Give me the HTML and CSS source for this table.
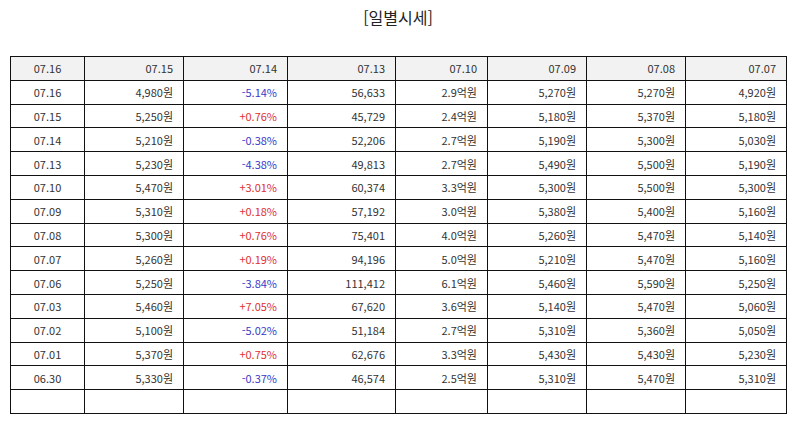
FILE: index.html
```html
<!DOCTYPE html>
<html lang="ko">
<head>
<meta charset="utf-8">
<title>일별시세</title>
<link rel="stylesheet" href="styles.css">
</head>
<body>
<div class="page">
  <h1 class="title">[일별시세]</h1>
  <table class="quotes">
    <colgroup>
      <col class="c1"><col class="c2"><col class="c3"><col class="c4"><col class="c5"><col class="c6"><col class="c7"><col class="c8">
    </colgroup>
    <thead>
      <tr><th class="date">07.16</th><th>07.15</th><th>07.14</th><th>07.13</th><th>07.10</th><th>07.09</th><th>07.08</th><th>07.07</th></tr>
    </thead>
    <tbody>
      <tr><td class="date">07.16</td><td>4,980원</td><td class="down">-5.14%</td><td>56,633</td><td>2.9억원</td><td>5,270원</td><td>5,270원</td><td>4,920원</td></tr>
      <tr><td class="date">07.15</td><td>5,250원</td><td class="up">+0.76%</td><td>45,729</td><td>2.4억원</td><td>5,180원</td><td>5,370원</td><td>5,180원</td></tr>
      <tr><td class="date">07.14</td><td>5,210원</td><td class="down">-0.38%</td><td>52,206</td><td>2.7억원</td><td>5,190원</td><td>5,300원</td><td>5,030원</td></tr>
      <tr><td class="date">07.13</td><td>5,230원</td><td class="down">-4.38%</td><td>49,813</td><td>2.7억원</td><td>5,490원</td><td>5,500원</td><td>5,190원</td></tr>
      <tr><td class="date">07.10</td><td>5,470원</td><td class="up">+3.01%</td><td>60,374</td><td>3.3억원</td><td>5,300원</td><td>5,500원</td><td>5,300원</td></tr>
      <tr><td class="date">07.09</td><td>5,310원</td><td class="up">+0.18%</td><td>57,192</td><td>3.0억원</td><td>5,380원</td><td>5,400원</td><td>5,160원</td></tr>
      <tr><td class="date">07.08</td><td>5,300원</td><td class="up">+0.76%</td><td>75,401</td><td>4.0억원</td><td>5,260원</td><td>5,470원</td><td>5,140원</td></tr>
      <tr><td class="date">07.07</td><td>5,260원</td><td class="up">+0.19%</td><td>94,196</td><td>5.0억원</td><td>5,210원</td><td>5,470원</td><td>5,160원</td></tr>
      <tr><td class="date">07.06</td><td>5,250원</td><td class="down">-3.84%</td><td>111,412</td><td>6.1억원</td><td>5,460원</td><td>5,590원</td><td>5,250원</td></tr>
      <tr><td class="date">07.03</td><td>5,460원</td><td class="up">+7.05%</td><td>67,620</td><td>3.6억원</td><td>5,140원</td><td>5,470원</td><td>5,060원</td></tr>
      <tr><td class="date">07.02</td><td>5,100원</td><td class="down">-5.02%</td><td>51,184</td><td>2.7억원</td><td>5,310원</td><td>5,360원</td><td>5,050원</td></tr>
      <tr><td class="date">07.01</td><td>5,370원</td><td class="up">+0.75%</td><td>62,676</td><td>3.3억원</td><td>5,430원</td><td>5,430원</td><td>5,230원</td></tr>
      <tr><td class="date">06.30</td><td>5,330원</td><td class="down">-0.37%</td><td>46,574</td><td>2.5억원</td><td>5,310원</td><td>5,470원</td><td>5,310원</td></tr>
      <tr class="empty"><td></td><td></td><td></td><td></td><td></td><td></td><td></td><td></td></tr>
    </tbody>
  </table>
</div>
</body>
</html>
```

FILE: styles.css
```css
html, body {
  margin: 0;
  padding: 0;
  background: #ffffff;
}

.page {
  padding: 0 8px 0 10px;
  font-family: "Noto Sans CJK KR", "Noto Sans", sans-serif;
  color: #333333;
}

.title {
  margin: 7px 0 0 0;
  height: 49px;
  font-size: 16px;
  line-height: 21px;
  font-weight: 400;
  text-align: center;
  color: #222222;
}

.quotes {
  width: 776px;
  table-layout: fixed;
  border-collapse: collapse;
  font-size: 11px;
}

.c1 { width: 74px; }
.c2 { width: 99px; }
.c3 { width: 104px; }
.c4 { width: 108px; }
.c5 { width: 92px; }
.c6 { width: 99px; }
.c7 { width: 99px; }
.c8 { width: 101px; }

.quotes th,
.quotes td {
  border: 1px solid #111111;
  height: 22.8px;
  padding: 0 10px 0 4px;
  text-align: right;
  font-weight: 400;
  line-height: 14px;
  white-space: nowrap;
  color: #333333;
}

.quotes th {
  background: #f2f2f2;
}

.quotes .date {
  text-align: center;
  padding: 0;
}

.quotes td.up { color: #e0302f; }
.quotes td.down { color: #3a3ac8; }
```
